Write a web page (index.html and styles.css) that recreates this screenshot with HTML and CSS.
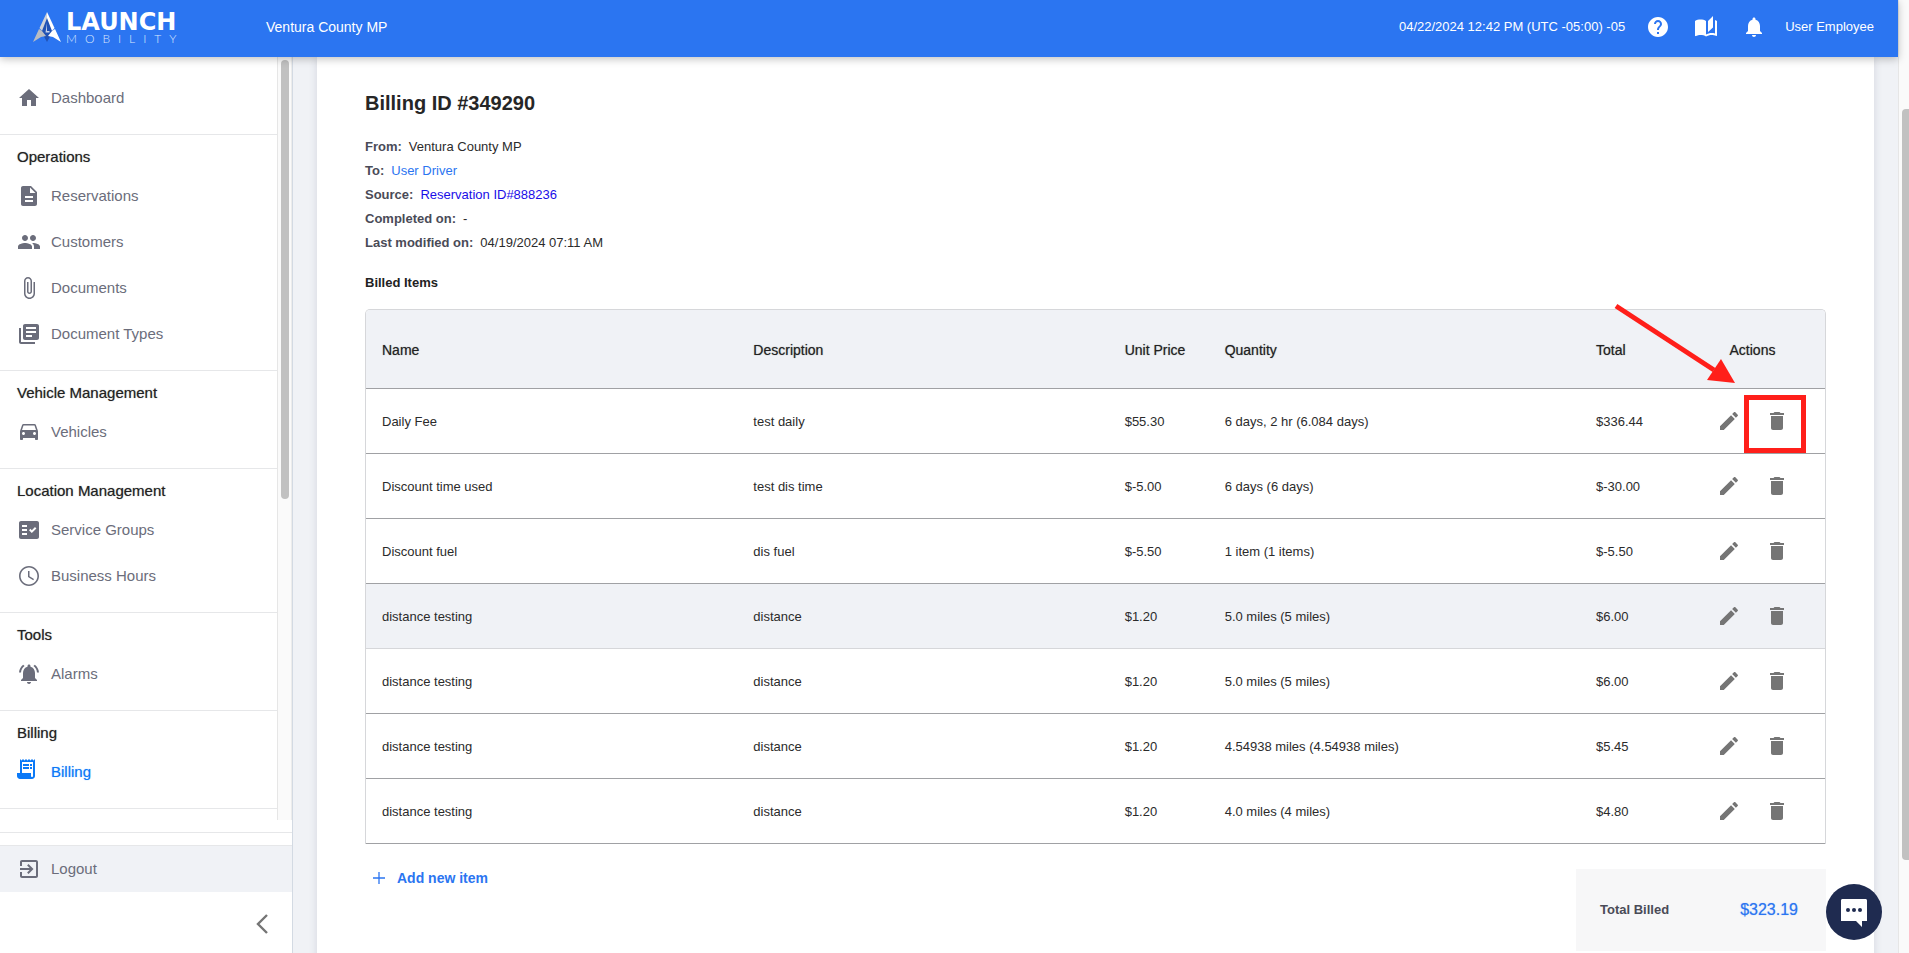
FILE: index.html
```html
<!DOCTYPE html>
<html lang="en">
<head>
<meta charset="utf-8">
<meta name="viewport" content="width=device-width, initial-scale=1">
<title>Billing ID #349290</title>
<link rel="stylesheet" href="styles.css">
</head>
<body>
<svg class="sprite" aria-hidden="true">
  <symbol id="edit" viewBox="0 0 24 24"><path d="M3 17.25V21h3.75L17.81 9.94l-3.75-3.75L3 17.25zM20.71 7.04c.39-.39.39-1.02 0-1.41l-2.34-2.34c-.39-.39-1.02-.39-1.41 0l-1.83 1.83 3.75 3.75 1.83-1.83z"/></symbol>
  <symbol id="trash" viewBox="0 0 24 24"><path d="M6 19c0 1.1.9 2 2 2h8c1.1 0 2-.9 2-2V7H6v12zM19 4h-3.5l-1-1h-5l-1 1H5v2h14V4z"/></symbol>
</svg>
<div class="app">
  <div class="page">
    <header class="topbar">
      <a class="logo" href="#" aria-label="Launch Mobility">
        <svg class="logo-mark" viewBox="0 0 28 32" aria-hidden="true">
          <path d="M14 5 8 20l6 11 6-11z" fill="#2152b4"/>
          <path d="M14 1 6.500 17 9 20l5-13z" fill="#cfd3da"/>
          <path d="M14 1l7.500 16L19 20 14 7z" fill="#fff"/>
          <path d="M6 18 0 31l8-5 5-1-4-5z" fill="#b9bcc2"/>
          <path d="M22 18l6 13-8-5-5-1 4-5z" fill="#fff"/>
          <path d="M14 12v8h2.500v1.500H12.500z" fill="#c9d3e8"/>
        </svg>
        <span class="logo-text"><span class="logo-top">LAUNCH</span><span class="logo-sub">MOBILITY</span></span>
      </a>
      <span class="org">Ventura County MP</span>
      <div class="top-right">
        <span class="clock">04/22/2024 12:42 PM (UTC -05:00) -05</span>
        <button class="icon-btn" type="button" aria-label="Help"><svg viewBox="0 0 24 24"><path d="M12 2C6.48 2 2 6.48 2 12s4.48 10 10 10 10-4.48 10-10S17.52 2 12 2zm1 17h-2v-2h2v2zm2.07-7.75-.9.92C13.45 12.9 13 13.5 13 15h-2v-.5c0-1.1.45-2.1 1.17-2.83l1.24-1.26c.37-.36.59-.86.59-1.41 0-1.1-.9-2-2-2s-2 .9-2 2H8c0-2.21 1.79-4 4-4s4 1.79 4 4c0 .88-.36 1.68-.93 2.25z"/></svg></button>
        <button class="icon-btn" type="button" aria-label="Guide"><svg viewBox="0 0 24 24"><path d="M19 1l-5 5v11l5-4.500V1zM1 6v14.650c0 .25.25.5.5.5.1 0 .15-.05.25-.05C3.100 20.450 5.050 20 6.500 20c1.950 0 4.050.4 5.500 1.500V6c-1.450-1.100-3.550-1.500-5.500-1.500S2.450 4.900 1 6zm22 13.500V6c-.6-.45-1.250-.75-2-1v13.500c-1.100-.35-2.300-.5-3.500-.5-1.700 0-4.150.65-5.500 1.500v2c1.350-.85 3.800-1.500 5.500-1.500 1.650 0 3.350.3 4.750 1.050.1.05.15.05.25.05.25 0 .5-.25.5-.5v-1.100z"/></svg></button>
        <button class="icon-btn" type="button" aria-label="Notifications"><svg viewBox="0 0 24 24"><path d="M12 22c1.1 0 2-.9 2-2h-4c0 1.1.9 2 2 2zm6-6v-5c0-3.07-1.63-5.64-4.5-6.32V4c0-.83-.67-1.5-1.5-1.5s-1.5.67-1.5 1.5v.68C7.64 5.36 6 7.92 6 11v5l-2 2v1h16v-1l-2-2z"/></svg></button>
        <span class="user">User Employee</span>
      </div>
    </header>
    <div class="body">
      <aside class="sidebar">
        <div class="nav-scroll">
          <nav class="nav">
            <div class="group first">
              <a class="item" href="#"><svg viewBox="0 0 24 24"><path d="M10 20v-6h4v6h5v-8h3L12 3 2 12h3v8z"/></svg>Dashboard</a>
            </div>
            <div class="group">
              <h2 class="group-title">Operations</h2>
              <a class="item" href="#"><svg viewBox="0 0 24 24"><path d="M14 2H6c-1.1 0-2 .9-2 2v16c0 1.100.89 2 1.990 2H18c1.100 0 2-.9 2-2V8l-6-6zm2 16H8v-2h8v2zm0-4H8v-2h8v2zm-3-5V3.500L18.500 9H13z"/></svg>Reservations</a>
              <a class="item" href="#"><svg viewBox="0 0 24 24"><path d="M16 11c1.660 0 2.990-1.340 2.990-3S17.660 5 16 5c-1.660 0-3 1.340-3 3s1.340 3 3 3zm-8 0c1.660 0 2.990-1.340 2.990-3S9.660 5 8 5C6.340 5 5 6.340 5 8s1.340 3 3 3zm0 2c-2.330 0-7 1.170-7 3.500V19h14v-2.500c0-2.330-4.670-3.500-7-3.500zm8 0c-.29 0-.62.02-.97.05 1.160.84 1.970 1.970 1.970 3.450V19h6v-2.500c0-2.330-4.670-3.500-7-3.500z"/></svg>Customers</a>
              <a class="item" href="#"><svg viewBox="0 0 24 24"><path d="M16.500 6v11.500c0 2.210-1.790 4-4 4s-4-1.790-4-4V5c0-1.380 1.120-2.500 2.500-2.500s2.500 1.120 2.500 2.500v10.500c0 .55-.45 1-1 1s-1-.45-1-1V6H10v9.500c0 1.380 1.120 2.500 2.500 2.500s2.500-1.120 2.500-2.500V5c0-2.210-1.790-4-4-4S7 2.790 7 5v12.500c0 3.040 2.460 5.500 5.500 5.500s5.500-2.460 5.500-5.500V6h-1.500z"/></svg>Documents</a>
              <a class="item" href="#"><svg viewBox="0 0 24 24"><path d="M4 6H2v14c0 1.100.9 2 2 2h14v-2H4V6zm16-4H8c-1.100 0-2 .9-2 2v12c0 1.100.9 2 2 2h12c1.100 0 2-.9 2-2V4c0-1.100-.9-2-2-2zm-1 9H9V9h10v2zm-4 4H9v-2h6v2zm4-8H9V5h10v2z"/></svg>Document Types</a>
            </div>
            <div class="group">
              <h2 class="group-title">Vehicle Management</h2>
              <a class="item" href="#"><svg viewBox="0 0 24 24"><path d="M18.920 5.010C18.720 4.420 18.160 4 17.500 4h-11c-.66 0-1.210.42-1.420 1.010L3 11v8c0 .55.45 1 1 1h1c.55 0 1-.45 1-1v-1h12v1c0 .55.45 1 1 1h1c.55 0 1-.45 1-1v-8l-2.080-5.990zM6.500 15c-.83 0-1.500-.67-1.500-1.500S5.670 12 6.500 12s1.500.67 1.500 1.500S7.330 15 6.500 15zm11 0c-.83 0-1.500-.67-1.500-1.500s.67-1.500 1.500-1.500 1.500.67 1.500 1.500-.67 1.500-1.500 1.500zM5 10l1.500-4.500h11L19 10H5z"/></svg>Vehicles</a>
            </div>
            <div class="group">
              <h2 class="group-title">Location Management</h2>
              <a class="item" href="#"><svg viewBox="0 0 24 24"><path fill-rule="evenodd" d="M20 3H4c-1.100 0-2 .9-2 2v14c0 1.100.9 2 2 2h16c1.100 0 2-.9 2-2V5c0-1.100-.9-2-2-2zM10 17H5v-2h5v2zm0-4H5v-2h5v2zm0-4H5V7h5v2zm4.820 6L12 12.160l1.410-1.410 1.410 1.420L17.990 9l1.420 1.420L14.820 15z"/></svg>Service Groups</a>
              <a class="item" href="#"><svg viewBox="0 0 24 24"><path d="M11.990 2C6.470 2 2 6.480 2 12s4.470 10 9.990 10C17.520 22 22 17.520 22 12S17.520 2 11.990 2zM12 20.400c-4.640 0-8.400-3.760-8.400-8.400S7.360 3.600 12 3.600s8.400 3.760 8.400 8.400-3.760 8.400-8.400 8.400z"/><path d="M12.500 7H11v6l5.250 3.150.75-1.230-4.500-2.670z"/></svg>Business Hours</a>
            </div>
            <div class="group">
              <h2 class="group-title">Tools</h2>
              <a class="item" href="#"><svg viewBox="0 0 24 24"><path d="M7.580 4.080 6.150 2.650C3.750 4.480 2.170 7.300 2.030 10.500h2c.15-2.650 1.510-4.970 3.550-6.420zM19.970 10.500h2c-.15-3.200-1.730-6.020-4.120-7.850l-1.420 1.430c2.020 1.450 3.390 3.770 3.540 6.420zM18 11c0-3.070-1.640-5.640-4.500-6.320V4c0-.83-.67-1.500-1.500-1.500s-1.500.67-1.500 1.500v.68C7.630 5.360 6 7.920 6 11v5l-2 2v1h16v-1l-2-2v-5zM12 22c.14 0 .27-.01.4-.04.65-.14 1.180-.58 1.440-1.180.1-.24.15-.5.15-.78h-4c.01 1.100.9 2 2.010 2z"/></svg>Alarms</a>
            </div>
            <div class="group">
              <h2 class="group-title">Billing</h2>
              <a class="item active" href="#" aria-current="page"><svg viewBox="3 3 24 24"><path d="M19.500 3.500 18 2l-1.500 1.500L15 2l-1.500 1.500L12 2l-1.500 1.500L9 2 7.500 3.500 6 2v14H3v3c0 1.660 1.340 3 3 3h12c1.660 0 3-1.340 3-3V2l-1.500 1.500zM19 19c0 .55-.45 1-1 1s-1-.45-1-1v-3H8V5h11v14zM9 7h6v2H9zM16 7h2v2h-2zM9 10h6v2H9zM16 10h2v2h-2z"/></svg>Billing</a>
            </div>
          </nav>
          <div class="nav-track"><div class="nav-thumb"></div></div>
        </div>
        <div class="side-foot">
          <a class="item logout" href="#"><svg viewBox="0 0 24 24"><path d="M10.090 15.590 11.500 17l5-5-5-5-1.410 1.410L12.670 11H3v2h9.670l-2.580 2.590zM19 3H5c-1.110 0-2 .9-2 2v4h2V5h14v14H5v-4H3v4c0 1.100.89 2 2 2h14c1.100 0 2-.9 2-2V5c0-1.100-.9-2-2-2z"/></svg>Logout</a>
          <button class="collapse" type="button" aria-label="Collapse menu"><svg viewBox="0 0 12 20"><path d="M11 1 2 10l9 9" fill="none" stroke="#757575" stroke-width="2.400"/></svg></button>
        </div>
      </aside>
      <main class="main">
        <article class="card">
          <h1 class="title">Billing ID #349290</h1>
          <dl class="meta">
            <div><dt>From:</dt><dd>Ventura County MP</dd></div>
            <div><dt>To:</dt><dd><a class="link" href="#">User Driver</a></dd></div>
            <div><dt>Source:</dt><dd><a class="link-plain" href="#">Reservation ID#888236</a></dd></div>
            <div><dt>Completed on:</dt><dd>-</dd></div>
            <div><dt>Last modified on:</dt><dd>04/19/2024 07:11 AM</dd></div>
          </dl>
          <h2 class="subtitle">Billed Items</h2>
          <div class="table-wrap">
            <table class="items">
              <colgroup><col><col><col class="c-price"><col><col class="c-total"><col class="c-actions"></colgroup>
              <thead><tr><th>Name</th><th>Description</th><th>Unit Price</th><th>Quantity</th><th>Total</th><th class="act">Actions</th></tr></thead>
              <tbody>
                <tr><td>Daily Fee</td><td>test daily</td><td>$55.30</td><td>6 days, 2 hr (6.084 days)</td><td>$336.44</td><td class="act"><div class="actions"><button type="button" aria-label="Edit"><svg><use href="#edit"/></svg></button><button type="button" aria-label="Delete"><svg><use href="#trash"/></svg></button></div></td></tr>
                <tr><td>Discount time used</td><td>test dis time</td><td>$-5.00</td><td>6 days (6 days)</td><td>$-30.00</td><td class="act"><div class="actions"><button type="button" aria-label="Edit"><svg><use href="#edit"/></svg></button><button type="button" aria-label="Delete"><svg><use href="#trash"/></svg></button></div></td></tr>
                <tr><td>Discount fuel</td><td>dis fuel</td><td>$-5.50</td><td>1 item (1 items)</td><td>$-5.50</td><td class="act"><div class="actions"><button type="button" aria-label="Edit"><svg><use href="#edit"/></svg></button><button type="button" aria-label="Delete"><svg><use href="#trash"/></svg></button></div></td></tr>
                <tr class="hovered"><td>distance testing</td><td>distance</td><td>$1.20</td><td>5.0 miles (5 miles)</td><td>$6.00</td><td class="act"><div class="actions"><button type="button" aria-label="Edit"><svg><use href="#edit"/></svg></button><button type="button" aria-label="Delete"><svg><use href="#trash"/></svg></button></div></td></tr>
                <tr><td>distance testing</td><td>distance</td><td>$1.20</td><td>5.0 miles (5 miles)</td><td>$6.00</td><td class="act"><div class="actions"><button type="button" aria-label="Edit"><svg><use href="#edit"/></svg></button><button type="button" aria-label="Delete"><svg><use href="#trash"/></svg></button></div></td></tr>
                <tr><td>distance testing</td><td>distance</td><td>$1.20</td><td>4.54938 miles (4.54938 miles)</td><td>$5.45</td><td class="act"><div class="actions"><button type="button" aria-label="Edit"><svg><use href="#edit"/></svg></button><button type="button" aria-label="Delete"><svg><use href="#trash"/></svg></button></div></td></tr>
                <tr><td>distance testing</td><td>distance</td><td>$1.20</td><td>4.0 miles (4 miles)</td><td>$4.80</td><td class="act"><div class="actions"><button type="button" aria-label="Edit"><svg><use href="#edit"/></svg></button><button type="button" aria-label="Delete"><svg><use href="#trash"/></svg></button></div></td></tr>
              </tbody>
            </table>
            <svg class="callout" viewBox="0 0 226 160" aria-hidden="true">
              <path d="M16 6 114 70" stroke="#ff1f1a" stroke-width="5" fill="none"/>
              <path d="M121 59 135 83 107 80z" fill="#ff1f1a"/>
              <rect x="146.500" y="97.500" width="57" height="53" stroke="#ff1f1a" stroke-width="5" fill="none"/>
            </svg>
          </div>
          <div class="card-foot">
            <button class="add" type="button"><svg viewBox="0 0 12 12"><path d="M6 0v12M0 6h12" stroke="#2b75f1" stroke-width="1.300"/></svg>Add new item</button>
            <div class="total"><span class="total-label">Total Billed</span><span class="total-value">$323.19</span></div>
          </div>
        </article>
      </main>
    </div>
  </div>
  <div class="page-track"><div class="page-thumb"></div></div>
</div>
<button class="chat" type="button" aria-label="Open chat"><svg viewBox="0 0 56 56"><path d="M16.500 15h23c.9 0 1.500.6 1.500 1.500V37h-5v6l-6-6H15V16.500c0-.9.6-1.500 1.500-1.500z" fill="#fff"/><circle cx="22" cy="26" r="2" fill="#1f2b50"/><circle cx="28" cy="26" r="2" fill="#1f2b50"/><circle cx="34" cy="26" r="2" fill="#1f2b50"/></svg></button>
</body>
</html>
```
FILE: styles.css
```css
* { box-sizing: border-box; }
body { margin: 0; font: 13px/20px "Liberation Sans", Arial, sans-serif; color: #2b2b2b; }
h1, h2, dl, dd { margin: 0; }
a { text-decoration: none; }
button { border: 0; padding: 0; background: none; font: inherit; cursor: pointer; }
svg { display: block; flex: none; }
.sprite { position: absolute; width: 0; height: 0; }

.app { display: flex; height: 100vh; overflow: hidden; background: #f0f2f6; }
.page { flex: 1; min-width: 0; display: flex; flex-direction: column; }

.topbar { position: relative; z-index: 2; flex: none; display: flex; align-items: center; height: 57px; padding: 0 24px 3px 33px; background: #2b75f1; color: #fff; box-shadow: 0 2px 8px rgba(0, 0, 0, .25); }
.logo { display: flex; align-items: center; gap: 5px; width: 233px; color: #fff; }
.logo-mark { width: 28px; height: 32px; }
.logo-text { display: flex; flex-direction: column; }
.logo-top { font: 700 24px/24px "DejaVu Sans", sans-serif; }
.logo-sub { font: 300 12px/10px Lato, sans-serif; letter-spacing: 8px; color: #dbe7fd; }
.org { font-size: 14px; }
.top-right { margin-left: auto; display: flex; align-items: center; gap: 24px; }
.clock { margin-right: -3px; }
.user { margin-left: -5px; }
.icon-btn svg { width: 24px; height: 24px; fill: #fff; }

.body { flex: 1; min-height: 0; display: flex; }
.sidebar { flex: none; width: 293px; display: flex; flex-direction: column; background: #fff; border-right: 1px solid #d3dae3; }
.nav-scroll { flex: 1; min-height: 0; display: flex; overflow: hidden; }
.nav { flex: 1; }
.nav-track { width: 15px; padding: 3px; background: #fafafa; border-left: 1px solid #e6e6e6; border-right: 1px solid #ececec; }
.nav-thumb { width: 8px; height: 58%; border-radius: 4px; background: #c1c1c1; }
.group { padding: 12px 0 13px; border-bottom: 1px solid #e6e7e9; }
.group.first { padding-top: 18px; }
.group-title { margin-bottom: 6px; padding-left: 17px; font-size: 15px; font-weight: 400; line-height: 20px; color: #222; text-shadow: 0 0 1px #2228; }
.item { display: flex; align-items: center; gap: 10px; height: 46px; padding-left: 17px; font-size: 15px; color: #6b6d7b; }
.item svg { width: 24px; height: 24px; fill: #6b6d7b; overflow: visible; }
.item.active { color: #0b79f7; text-shadow: 0 0 1px #0b79f788; }
.item.active svg { fill: #0b79f7; }
.side-foot { margin-top: 12px; padding-top: 12px; border-top: 1px solid #e6e7e9; }
.logout { height: 47px; background: #f0f2f6; border-top: 1px solid #e6e7e9; }
.collapse { display: flex; align-items: center; justify-content: flex-end; width: 100%; height: 61px; padding: 2px 24px 0 0; }
.collapse svg { width: 12px; height: 20px; }

.main { flex: 1; min-width: 0; padding: 0 24px; }
.card { min-height: 100%; padding: 34px 48px; background: #fff; box-shadow: 0 0 8px rgba(40, 50, 80, .14); }
.title { font-size: 20px; line-height: 24px; font-weight: 700; color: #262626; }
.meta { margin-top: 20px; line-height: 24px; }
.meta > div { display: flex; gap: 7px; }
.meta dt { font-weight: 700; color: #4a4b57; }
.link { color: #2b75f1; }
.link-plain { color: #1a0de8; }
.subtitle { margin: 18px 0 16px; font-size: 13px; line-height: 20px; color: #222; }

.table-wrap { position: relative; }
.items { width: 100%; table-layout: fixed; border: 1px solid #d6d7da; border-bottom: 0; border-radius: 5px 5px 0 0; border-spacing: 0; overflow: hidden; }
.c-price, .c-total { width: 100px; }
.c-actions { width: 145px; }
.items th { height: 79px; padding: 2px 16px 0; background: #f0f2f6; border-bottom: 1px solid #a0a1a4; font-size: 14px; font-weight: 400; text-align: left; color: #222; text-shadow: 0 0 1px #2228; }
.items td { height: 65px; padding: 2px 16px 0; border-bottom: 1px solid #a0a1a4; }
.items th.act { text-align: center; }
.items td.act { padding-top: 0; }
.hovered td { background: #f0f2f6; border-bottom-color: #d6d7da; }
.actions { display: flex; justify-content: center; gap: 24px; }
.actions svg { width: 24px; height: 24px; fill: #757575; }
.callout { position: absolute; top: -9px; right: 0; width: 226px; height: 160px; pointer-events: none; }

.card-foot { display: flex; justify-content: space-between; align-items: flex-start; margin-top: 25px; }
.add { display: flex; align-items: center; gap: 12px; margin-left: 8px; font-size: 14px; font-weight: 700; line-height: 18px; color: #2b75f1; }
.add svg { width: 12px; height: 12px; }
.total { display: flex; align-items: center; justify-content: space-between; width: 250px; height: 82px; padding: 0 28px 0 24px; background: #f7f7f8; }
.total-label { font-weight: 700; color: #4a4b57; }
.total-value { font-size: 16px; color: #2b75f1; text-shadow: 0 0 1px #2b75f188; }

.page-track { flex: none; width: 11px; padding: 109px 0 0 3px; background: #fafafa; border-left: 1px solid #e6e6e6; }
.page-thumb { height: 89%; border-radius: 4px 0 0 4px; background: #c1c1c1; }
.chat { position: fixed; z-index: 3; right: 27px; bottom: 13px; width: 56px; height: 56px; border-radius: 50%; background: #1f2b50; }
```
